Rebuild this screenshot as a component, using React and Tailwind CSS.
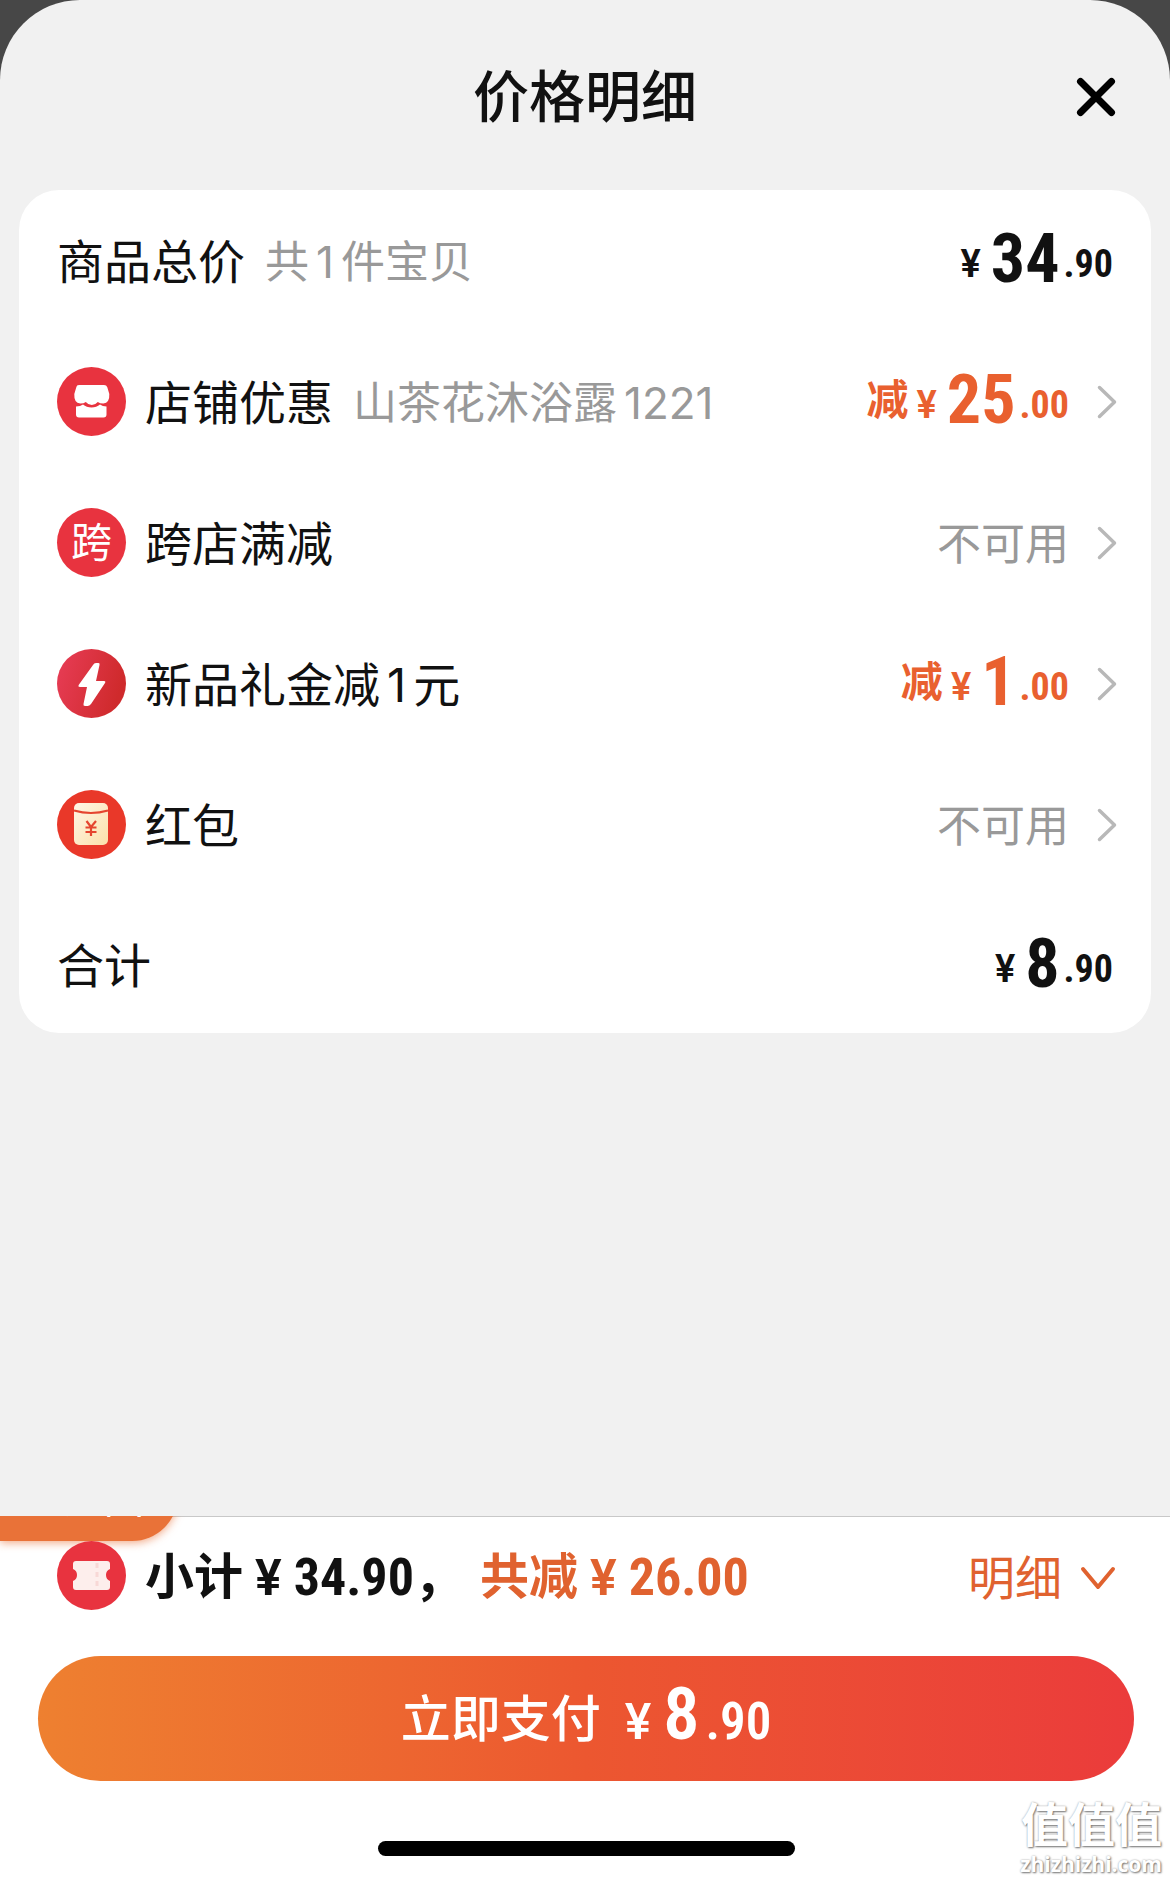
import React from 'react';
import clsx from 'clsx';

const CJK = "font-['Inter','Noto_Sans_CJK_SC',sans-serif]";
const DIN = "font-['Roboto_Condensed','Roboto','Noto_Sans_CJK_SC',sans-serif]";
const YEN = "font-['Roboto','Noto_Sans_CJK_SC',sans-serif]";

function ShopIcon() {
    return (
        <svg viewBox="0 0 69 69" className="size-[69px] shrink-0" aria-hidden="true">
            <circle cx="34.5" cy="34.5" r="34.5" fill="#e8333f" />
            <path
                d="M22 18h25q2.500 0 3.300 2.200l2 6.800q.5 9-6 9.500-3.500 0-5.500-1.500-2.500 3-6 3t-6-3q-2 1.500-5.500 1.500-6.500-.5-6-9.500l2-6.800Q19.500 18 22 18Z"
                fill="#fff"
            />
            <path
                d="M19 39.500q4.500 0 7-2 3.500 3 8.500 3t8.500-3q2.500 2 6.500 2v8q0 3-3 3H22q-3 0-3-3Z"
                fill="#fff"
            />
        </svg>
    );
}

function CrossShopIcon() {
    return (
        <span className="flex size-[69px] shrink-0 items-center justify-center rounded-full bg-[#e8333f] text-[41px] leading-none text-white">
            跨
        </span>
    );
}

function BoltIcon() {
    return (
        <svg viewBox="0 0 69 69" className="size-[69px] shrink-0" aria-hidden="true">
            <defs>
                <linearGradient id="bolt" x1="0" y1="0" x2="1" y2="0.3">
                    <stop offset="0" stopColor="#e83d57" />
                    <stop offset="1" stopColor="#cf2a2c" />
                </linearGradient>
            </defs>
            <circle cx="34.5" cy="34.5" r="34.5" fill="url(#bolt)" />
            <path
                d="M39 14h2.500q1.500 0 1 2L39 32h8q2 0 1 2L34 55q-1.500 2-3.500 2H28q-2 0-1.500-2L30 38h-7q-2.500 0-1-2.500L36 16q1-2 3-2Z"
                fill="#fff"
            />
        </svg>
    );
}

function RedPacketIcon() {
    return (
        <svg viewBox="0 0 69 69" className="size-[69px] shrink-0" aria-hidden="true">
            <defs>
                <linearGradient id="packet" x1="0" y1="0" x2="1" y2="1">
                    <stop offset="0" stopColor="#fff6e6" />
                    <stop offset="1" stopColor="#fbe0aa" />
                </linearGradient>
            </defs>
            <circle cx="34.5" cy="34.5" r="34.5" fill="#e93829" />
            <rect x="17" y="13" width="34" height="42" rx="5" fill="url(#packet)" />
            <path d="M17 20.500q17 5 34 0" fill="none" stroke="#e5452f" strokeWidth="2" />
            <path d="M29.500 31l4.500 6 5-6M34 37v9M28.500 37.500h11M28.500 42h11" fill="none" stroke="#e5452f" strokeWidth="2.200" />
        </svg>
    );
}

function TicketIcon() {
    return (
        <svg viewBox="0 0 69 69" className="size-[69px] shrink-0" aria-hidden="true">
            <circle cx="34.5" cy="34.5" r="34.5" fill="#e8333f" />
            <path
                d="M19 20h31q3 0 3 3v5q-4 1.500-4 6t4 6v6q0 3-3 3H19q-3 0-3-3v-6q4-1.500 4-6t-4-6v-5q0-3 3-3Z"
                fill="#fdeeec"
            />
            <path d="M40 22v26" stroke="#f8d8d6" strokeWidth="3" strokeDasharray="5 4" />
        </svg>
    );
}

function ChevronRight() {
    return (
        <svg viewBox="0 0 20 34" className="h-[34px] w-5 shrink-0" aria-hidden="true">
            <path d="M2.500 2.500 17.500 17 2.500 31.500" fill="none" stroke="#b8b8b8" strokeWidth="3.500" strokeLinecap="round" strokeLinejoin="round" />
        </svg>
    );
}

// Numbers get a little air between them and the Chinese characters
function Label({ text }) {
    return text.split(/(\d+)/).map((part, i) =>
        /^\d+$/.test(part) ? <span key={i} className="mx-[7px]">{part}</span> : part
    );
}

function Price({ int, dec }) {
    return (
        <span className={clsx(DIN, 'flex items-end pb-1 font-bold')}>
            <span className={clsx(YEN, 'mr-2.5 text-[38px] font-semibold leading-[57px]')}>¥</span>
            <span className="text-[68px] leading-[68px]">{int}</span>
            <span className="ml-1 text-[38px] leading-[57px]">.{dec}</span>
        </span>
    );
}

const DISCOUNTS = [
    { name: '店铺优惠', note: '山茶花沐浴露1221', icon: ShopIcon, int: '25', dec: '00' },
    { name: '跨店满减', icon: CrossShopIcon },
    { name: '新品礼金减1元', icon: BoltIcon, int: '1', dec: '00' },
    { name: '红包', icon: RedPacketIcon },
];

function DiscountRow({ item }) {
    const Icon = item.icon;
    return (
        <button type="button" className="-mr-1 flex h-[69px] items-center text-left">
            <Icon />
            <span className="ml-[19px] pt-0.5 text-[47px] leading-none"><Label text={item.name} /></span>
            {item.note && (
                <span className="ml-5 pt-0.5 text-[44px] leading-none text-[#999]"><Label text={item.note} /></span>
            )}
            <span className="ml-auto mr-7 flex items-center">
                {item.int ? (
                    <span className="flex items-center text-[#e9602f]">
                        <span className="mr-2 pb-1 text-[42px] font-bold leading-none">减</span>
                        <Price int={item.int} dec={item.dec} />
                    </span>
                ) : (
                    <span className="pt-0.5 text-[44px] leading-none text-[#999]">不可用</span>
                )}
            </span>
            <ChevronRight />
        </button>
    );
}

export default function App() {
    return (
        <div className={clsx(CJK, 'relative flex min-h-screen flex-col bg-[#474747] text-[#111]')}>
            <main className="flex-1 rounded-t-[80px] bg-[#f1f1f1]">
                <header className="relative flex h-[190px] items-center justify-center pt-1">
                    <h1 className="text-[56px] font-medium leading-none">价格明细</h1>
                    <button type="button" aria-label="关闭" className="absolute right-[50px] p-1">
                        <svg viewBox="0 0 40 40" className="size-10" aria-hidden="true">
                            <path d="M4.500 4.500l31 31M35.500 4.500l-31 31" stroke="#000" strokeWidth="7" strokeLinecap="round" />
                        </svg>
                    </button>
                </header>

                <section className="mx-[19px] flex flex-col gap-[72px] rounded-[40px] bg-white px-[38px] pb-[33px] pt-9">
                    <div className="flex h-[69px] items-center">
                        <span className="pt-0.5 text-[47px] leading-none">商品总价</span>
                        <span className="ml-5 pt-0.5 text-[44px] leading-none text-[#999]"><Label text="共1件宝贝" /></span>
                        <span className="ml-auto">
                            <Price int="34" dec="90" />
                        </span>
                    </div>
                    {DISCOUNTS.map(item => (
                        <DiscountRow key={item.name} item={item} />
                    ))}
                    <div className="flex h-[69px] items-center justify-between">
                        <span className="text-[47px] leading-none">合计</span>
                        <Price int="8" dec="90" />
                    </div>
                </section>
            </main>

            <footer className="relative border-t border-[#c8c8c8] bg-white pb-6 pl-[38px] pr-9 pt-6">
                {/* floating tab, mostly hidden under the sheet */}
                <div className="absolute inset-x-0 -top-px h-10 overflow-hidden">
                    <div className="absolute bottom-[15px] left-0 flex h-[92px] w-[178px] items-end rounded-r-full bg-[#e97238] pb-[22px] pl-16 text-[40px] leading-none text-white shadow-[0_2px_8px_#e9723899]">
                        返回
                    </div>
                </div>

                <div className="relative flex h-[69px] items-center pl-[19px]">
                    <TicketIcon />
                    <p className={clsx(DIN, 'ml-[19px] flex items-center pt-1 text-[50px] font-bold leading-none')}>
                        <span className="text-[49px]">小计</span>
                        <span className={clsx(YEN, 'ml-3 font-semibold')}>¥</span>
                        <span className="ml-3 text-[52px]">34.90</span>
                        <span>，</span>
                    </p>
                    <p className={clsx(DIN, 'ml-4 flex items-center pt-1 text-[50px] font-bold leading-none text-[#e0622f]')}>
                        <span className="text-[49px]">共减</span>
                        <span className={clsx(YEN, 'ml-3 font-semibold')}>¥</span>
                        <span className="ml-3 text-[52px]">26.00</span>
                    </p>
                    <button type="button" className="ml-auto mr-[18px] flex items-center gap-[18px] pt-1 text-[47px] leading-none text-[#e0622f]">
                        明细
                        <svg viewBox="0 0 36 24" className="h-6 w-9" aria-hidden="true">
                            <path d="M3 3l15 18L33 3" fill="none" stroke="#e0622f" strokeWidth="4" strokeLinecap="round" strokeLinejoin="round" />
                        </svg>
                    </button>
                </div>

                <button
                    type="button"
                    className="mt-[46px] flex h-[125px] w-full items-center justify-center rounded-full bg-linear-to-r from-[#ee8030] via-[#ec5730] to-[#eb3b3b] text-white"
                >
                    <span className="text-[50px] font-medium leading-none">立即支付</span>
                    <span className={clsx(DIN, 'ml-6 flex items-baseline pb-2 font-semibold')}>
                        <span className={clsx(YEN, 'mr-3 text-[50px] font-medium')}>¥</span>
                        <span className="text-[72px]">8</span>
                        <span className="ml-1.5 text-[51px]">.90</span>
                    </span>
                </button>

                <div className="mx-auto mt-[60px] h-[15px] w-[417px] rounded-full bg-black" />
            </footer>

            <div className="absolute bottom-1 right-2 text-right font-bold text-white [text-shadow:1px_1px_2px_#777,0_0_2px_#aaa]">
                <div className="text-[47px] leading-[54px]">值值值</div>
                <div className="font-['Open_Sans',sans-serif] text-[21px] leading-6">zhizhizhi.com</div>
            </div>
        </div>
    );
}
